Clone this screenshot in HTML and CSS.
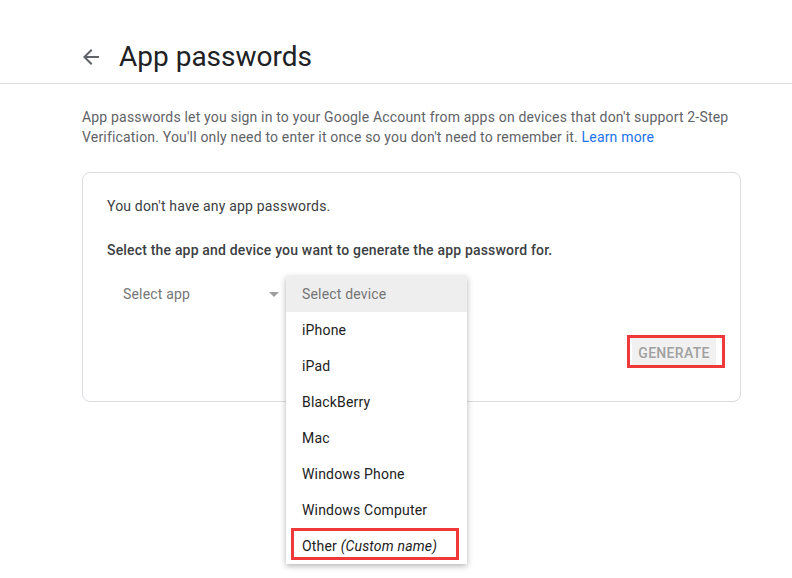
FILE: index.html
```html
<!DOCTYPE html>
<html>
<head>
<meta charset="utf-8">
<link rel="stylesheet" href="styles.css">
</head>
<body>
<header class="topbar">
  <svg class="back" width="24" height="24" viewBox="0 0 24 24"><path d="M20 11H7.83l5.59-5.59L12 4l-8 8 8 8 1.41-1.41L7.83 13H20v-2z" fill="#5f6368"/></svg>
  <h1 class="title">App passwords</h1>
</header>
<main class="content">
  <p class="intro">App passwords let you sign in to your Google Account from apps on devices that don't support 2-Step Verification. You'll only need to enter it once so you don't need to remember it. <a class="link" href="#">Learn more</a></p>
  <section class="card">
    <p class="none">You don't have any app passwords.</p>
    <p class="instr">Select the app and device you want to generate the app password for.</p>
    <div class="selects">
      <div class="select-app">
        <span class="placeholder">Select app</span>
        <span class="caret"></span>
      </div>
      <div class="select-device">
        <ul class="menu">
          <li class="item head">Select device</li>
          <li class="item">iPhone</li>
          <li class="item">iPad</li>
          <li class="item">BlackBerry</li>
          <li class="item">Mac</li>
          <li class="item">Windows Phone</li>
          <li class="item">Windows Computer</li>
          <li class="item other">Other <em>(Custom name)</em></li>
        </ul>
      </div>
    </div>
    <div class="actions">
      <button class="generate">GENERATE</button>
    </div>
  </section>
</main>
</body>
</html>
```
FILE: styles.css
```css
html, body {
  margin: 0;
  padding: 0;
  background: #fff;
}
html {
  height: 100%;
}
body {
  min-height: 100%;
  font-family: Roboto, "Liberation Sans", Arial, sans-serif;
  font-size: 14px;
  color: #3c4043;
}
.topbar {
  box-sizing: border-box;
  height: 84px;
  border-bottom: 1px solid #dadce0;
  display: flex;
  align-items: center;
  padding-left: 79px;
  padding-top: 31px;
}
.back {
  display: block;
  margin-right: 16px;
}
.title {
  margin: 0;
  font-size: 28px;
  font-weight: 400;
  color: #202124;
  line-height: 36px;
}
.content {
  margin-left: 82px;
  width: 659px;
  letter-spacing: 0.18px;
}
.intro {
  margin: 23px 0 0;
  line-height: 20px;
  color: #5f6368;
}
.link {
  color: #1a73e8;
  text-decoration: none;
}
.card {
  margin-top: 25px;
  border: 1px solid #dadce0;
  border-radius: 8px;
  padding: 23px 24px 33px;
}
.none {
  margin: 0;
  line-height: 20px;
  color: #3c4043;
}
.instr {
  margin: 24px 0 0;
  line-height: 20px;
  font-weight: 500;
  color: #3c4043;
}
.selects {
  margin-top: 16px;
  display: flex;
  height: 36px;
}
.select-app {
  width: 179px;
  display: flex;
  align-items: center;
  justify-content: space-between;
  padding: 0 7px 0 16px;
  box-sizing: border-box;
}
.placeholder {
  color: #757575;
}
.caret {
  width: 0;
  height: 0;
  border-left: 5px solid transparent;
  border-right: 5px solid transparent;
  border-top: 5px solid #9e9e9e;
}
.select-device {
  position: relative;
  width: 181px;
}
.menu {
  position: absolute;
  top: 0;
  left: 0;
  width: 181px;
  margin: 0;
  padding: 0;
  list-style: none;
  background: #fff;
  box-shadow: 0 2px 6px rgba(0,0,0,0.3);
  z-index: 2;
}
.item {
  height: 36px;
  line-height: 36px;
  padding-left: 16px;
  color: #212121;
  position: relative;
}
.item.head {
  background: #eeeeee;
  color: #757575;
}
.item.other::after {
  content: "";
  position: absolute;
  left: 5px;
  right: 8px;
  top: 0;
  bottom: 4px;
  border: 3px solid #f03a3a;
}
.actions {
  display: flex;
  justify-content: flex-end;
  margin-top: 26px;
}
.generate {
  position: relative;
  font-family: inherit;
  font-size: 14px;
  font-weight: 500;
  color: #a0a0a0;
  background: #f1f1f1;
  border: none;
  height: 30px;
  width: 84px;
  padding: 0;
  letter-spacing: 0.3px;
}
.generate::after {
  content: "";
  position: absolute;
  left: -5px;
  right: -9px;
  top: -3px;
  bottom: 0;
  border: 3px solid #f03a3a;
}
```
